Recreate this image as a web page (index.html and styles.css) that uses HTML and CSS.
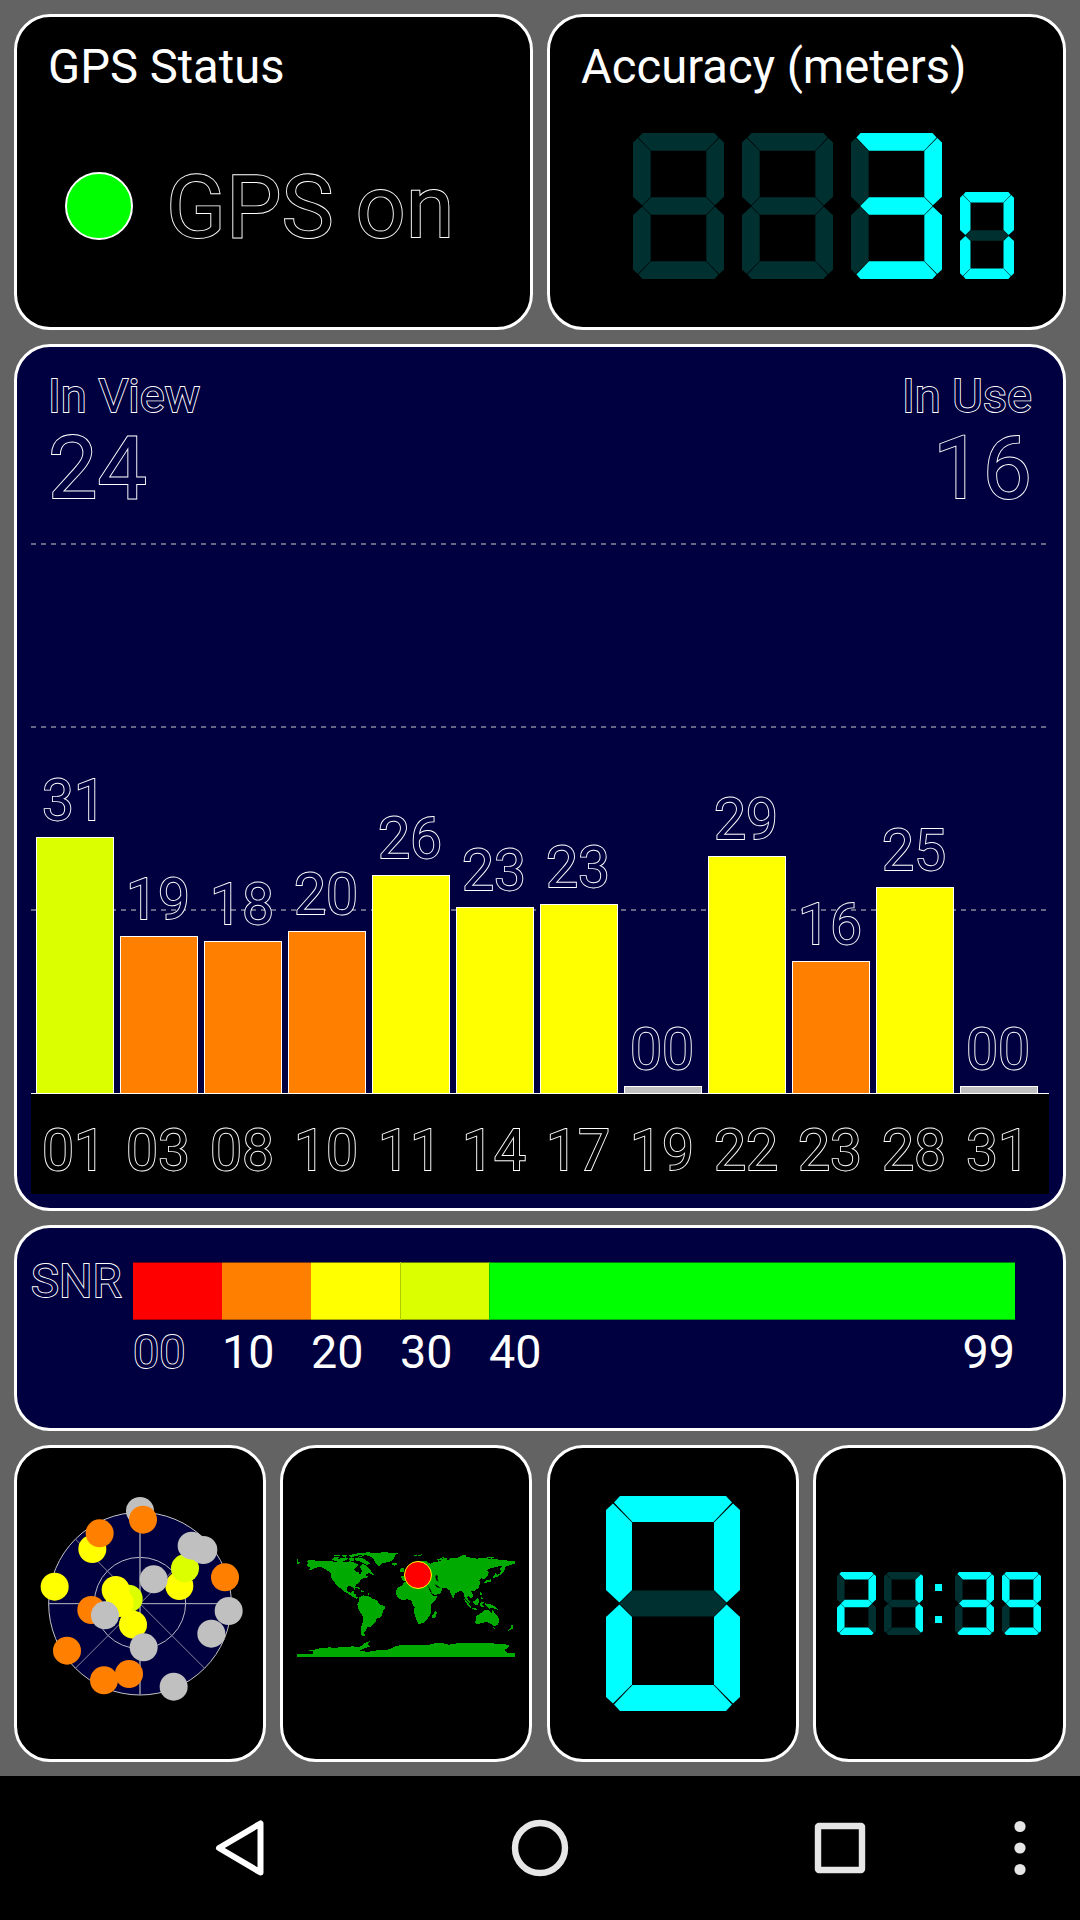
FILE: index.html
```html
<!DOCTYPE html>
<html lang="en">
<head>
<meta charset="utf-8">
<title>GPS Status</title>
<link rel="stylesheet" href="styles.css">
</head>
<body>
<svg class="defs" width="0" height="0" aria-hidden="true">
  <symbol id="digit" viewBox="0 0 134 215" preserveAspectRatio="none">
    <path class="sa" d="M8 6.5L14 0H120L126 6.5L107.5 26H26.5Z"/>
    <path class="sf" d="M0 14L7 7.5L26 26.5V94L13.4 106.5L0 94Z"/>
    <path class="sb" d="M134 14L127 7.5L108 26.5V94L120.6 106.5L134 94Z"/>
    <path class="sg" d="M13.6 107.5L26.3 94.5H107.7L120.4 107.5L107.7 120.5H26.3Z"/>
    <path class="se" d="M0 201L7 207.5L26 188.5V121L13.4 108.5L0 121Z"/>
    <path class="sc" d="M134 201L127 207.5L108 188.5V121L120.6 108.5L134 121Z"/>
    <path class="sd" d="M8 208.5L14 215H120L126 208.5L107.5 189H26.5Z"/>
  </symbol>
</svg>
<main class="dashboard">
  <section class="panel status">
    <h2 class="title">GPS Status</h2>
    <div class="status-row">
      <span class="lamp"></span>
      <span class="outline big">GPS on</span>
    </div>
  </section>
  <section class="panel accuracy">
    <h2 class="title">Accuracy (meters)</h2>
    <div class="digits">
      <svg class="digit n-off"><use href="#digit"/></svg>
      <svg class="digit n-off"><use href="#digit"/></svg>
      <svg class="digit n3"><use href="#digit"/></svg>
      <svg class="digit small n0"><use href="#digit"/></svg>
    </div>
  </section>
  <section class="panel chart">
    <div class="stats">
      <div><div class="outline label">In View</div><div class="outline big">24</div></div>
      <div class="right"><div class="outline label">In Use</div><div class="outline big">16</div></div>
    </div>
    <div class="plot">
      <div class="col"><span class="outline num">31</span><i class="bar lime" style="height:256px"></i></div>
      <div class="col"><span class="outline num">19</span><i class="bar orange" style="height:157px"></i></div>
      <div class="col"><span class="outline num">18</span><i class="bar orange" style="height:152px"></i></div>
      <div class="col"><span class="outline num">20</span><i class="bar orange" style="height:162px"></i></div>
      <div class="col"><span class="outline num">26</span><i class="bar yellow" style="height:218px"></i></div>
      <div class="col"><span class="outline num">23</span><i class="bar yellow" style="height:186px"></i></div>
      <div class="col"><span class="outline num">23</span><i class="bar yellow" style="height:189px"></i></div>
      <div class="col"><span class="outline num">00</span><i class="bar gray" style="height:7px"></i></div>
      <div class="col"><span class="outline num">29</span><i class="bar yellow" style="height:237px"></i></div>
      <div class="col"><span class="outline num">16</span><i class="bar orange" style="height:132px"></i></div>
      <div class="col"><span class="outline num">25</span><i class="bar yellow" style="height:206px"></i></div>
      <div class="col"><span class="outline num">00</span><i class="bar gray" style="height:7px"></i></div>
    </div>
    <div class="axis">
      <span class="outline num">01</span><span class="outline num">03</span><span class="outline num">08</span><span class="outline num">10</span><span class="outline num">11</span><span class="outline num">14</span><span class="outline num">17</span><span class="outline num">19</span><span class="outline num">22</span><span class="outline num">23</span><span class="outline num">28</span><span class="outline num">31</span>
    </div>
  </section>
  <section class="panel snr">
    <span class="outline label">SNR</span>
    <div class="scale">
      <div class="ramp"><i class="red"></i><i class="orange"></i><i class="yellow"></i><i class="lime edge"></i><i class="green edge"></i></div>
      <div class="ticks"><span class="outline">00</span><span>10</span><span>20</span><span>30</span><span>40</span><span>99</span></div>
    </div>
  </section>
  <section class="panel tile">
    <svg class="radar" width="220" height="240" viewBox="90 126 660 720">
      <circle class="sky" cx="420" cy="491" r="274"/>
      <circle class="ring" cx="420" cy="489" r="137"/>
      <path class="ring" d="M146 491H694"/>
      <path class="ring axisline" d="M420 217V765"/>
      <path class="ring thin" d="M226 297L614 685M614 297L226 685"/>
      <g class="dots">
        <circle class="gray" cx="420" cy="213" r="42"/><circle class="orange" cx="429" cy="239" r="42"/>
        <circle class="yellow" cx="277" cy="327" r="42"/><circle class="orange" cx="299" cy="280" r="42"/>
        <circle class="yellow" cx="164" cy="440" r="42"/>
        <circle class="yellow" cx="538" cy="438" r="42"/><circle class="lime" cx="555" cy="385" r="42"/>
        <circle class="gray" cx="575" cy="317" r="42"/><circle class="gray" cx="610" cy="330" r="42"/>
        <circle class="gray" cx="461" cy="418" r="42"/><circle class="orange" cx="675" cy="412" r="42"/>
        <circle class="gray" cx="686" cy="513" r="42"/><circle class="gray" cx="634" cy="581" r="42"/>
        <circle class="lime" cx="386" cy="476" r="42"/><circle class="yellow" cx="347" cy="450" r="42"/>
        <circle class="yellow" cx="359" cy="489" r="42"/><circle class="orange" cx="274" cy="510" r="42"/>
        <circle class="gray" cx="315" cy="526" r="42"/><circle class="yellow" cx="399" cy="554" r="42"/>
        <circle class="gray" cx="431" cy="622" r="42"/><circle class="orange" cx="201" cy="632" r="42"/>
        <circle class="orange" cx="312" cy="721" r="42"/><circle class="orange" cx="387" cy="702" r="42"/>
        <circle class="gray" cx="521" cy="740" r="42"/>
      </g>
    </svg>
  </section>
  <section class="panel tile map-tile">
    <svg class="map" width="218" height="105" viewBox="51 96 654 315">
      <g class="land">
        <path d="M51 117L56 120L54 125L63 129L57 131H51ZM78 123L92 120L120 123L150 123L165 126L180 122L196 126L210 124L222 128L236 134L228 142L222 150L226 154L236 156L240 164L246 152L240 140L246 132L258 136L264 142L272 150L274 156L280 160L282 166L274 162L266 158L256 166L268 168L258 174L248 176L240 180L238 188L230 192L224 200L226 212L220 204L210 196L202 200L200 208L204 217L214 218L218 212L224 212L220 220L228 222L228 230L236 234L230 236L218 230L206 222L196 216L186 210L180 202L174 194L170 188L178 200L182 208L174 200L166 190L158 182L154 174L154 162L150 156L140 150L130 144L118 140L106 144L94 150L82 152L92 144L86 140L80 136L86 130Z"/>
        <path d="M156 120L162 112L178 110L172 118L186 114L198 112L204 116L194 122L180 122L170 124ZM160 106L172 104L182 106L176 109ZM182 107L200 105L206 109L190 110ZM206 116L214 112L224 116L222 122L212 124ZM224 114L236 112L250 116L262 124L270 130L262 136L252 130L240 124L228 122ZM204 107L220 102L246 98L272 97L262 101L242 105L224 109L214 111ZM234 108L252 106L250 109L238 111Z"/>
        <path d="M248 104L272 99L300 98L318 96L336 100L354 100L346 106L342 116L336 123L322 126L308 130L300 138L292 136L286 128L282 118L276 111L262 107ZM334 131L342 128L352 130L352 134L342 137Z"/>
        <path d="M220 201L232 200L242 207L236 206L226 204ZM242 211L254 213L252 216L244 215ZM264 219L268 222L266 226Z"/>
        <path d="M236 234L244 228L250 226L262 229L270 230L276 237L288 239L294 246L300 254L312 257L316 263L310 272L306 285L300 293L290 296L286 306L278 315L272 320L262 322L258 332L252 338L256 348L248 350L242 342L242 328L248 308L248 288L240 276L234 264L232 252L238 244Z"/>
        <path d="M366 196L374 186L390 184L410 184L424 192L440 192L446 202L452 218L460 228L472 229L466 240L452 254L454 272L450 286L440 300L430 309L416 312L410 302L406 288L402 276L404 262L396 250L394 240L382 238L366 241L354 233L348 222L350 208L358 200Z"/>
        <path d="M466 272L471 278L466 292L458 297L456 288ZM360 150L366 143H372V156L362 157ZM362 169H380V184L368 182Z"/>
        <path d="M376 160L388 146L400 130L420 122L440 124L452 132L462 126L480 124L486 116L500 114L504 122L510 114L530 114L548 106L566 112L590 116L612 114L640 118L668 119L684 122H705V131L698 132L690 136L678 138L672 144L664 156L660 146L668 138L658 138L648 141L634 144L620 150L626 158L622 168L612 178L604 174L598 180L600 192L596 204L584 212L574 214L580 226L574 236L566 228L560 232L568 242L572 252L564 246L554 234L552 220L544 212L532 216L524 222L522 236L516 228L508 210L498 204L484 204L488 210L480 220L464 226L456 220L446 204L440 190L424 186L410 182L392 184L380 178Z"/>
        <path d="M472 118L486 113L497 108L488 115L474 123ZM400 104L414 107L426 103L420 109H404ZM544 104L560 107L554 110ZM620 112H642L634 116ZM638 171L646 164L648 150L650 166L658 162L664 154L676 142L672 154L664 162L652 170L642 174ZM610 187L620 181L634 177L632 187L624 186L616 190Z"/>
        <path d="M552 236L560 242L570 256L574 264L568 262L558 248ZM576 264L592 266L590 270L576 267ZM578 246L588 240L592 232L598 240L594 254L584 254ZM600 216L608 222L602 226ZM604 230L610 238L602 236ZM600 248L614 246L606 252L612 260L604 262L598 256ZM614 250L628 252L644 258L654 270L640 264L628 266L618 258Z"/>
        <path d="M588 290L598 282L606 278L614 271L622 270L630 273L634 282L638 268L644 279L654 290L658 302L654 314L642 320L634 312L620 306L606 309L590 314L584 306L588 300ZM640 322L648 324L644 327ZM692 313L700 318L698 326L684 333L692 324ZM249 344L258 349L250 348Z"/>
        <path d="M51 402H100L98 394L84 392L108 388L124 384L150 382L166 384L184 380L206 382L218 378L232 382L246 378L252 370L270 363L264 372L270 380L252 386L240 392L264 396L284 392L304 390L330 388L344 380L362 375L408 375L448 374L470 368L488 369L506 374L530 370L562 368L600 368L630 368L650 372L686 374L688 380L674 390L680 398L705 400V411H51Z"/>
      </g>
      <path class="water" d="M468 164L474 168L472 176L476 184L470 182L466 172ZM440 190L450 206L456 218L452 216ZM464 192L474 198L482 204L470 202Z"/>
      <circle class="pin" cx="414" cy="165" r="40.5"/>
    </svg>
  </section>
  <section class="panel tile">
    <svg class="digit huge n0"><use href="#digit"/></svg>
  </section>
  <section class="panel tile">
    <div class="clock">
      <svg class="digit tiny n2"><use href="#digit"/></svg>
      <svg class="digit tiny n1"><use href="#digit"/></svg>
      <div class="colon"><i></i><i></i></div>
      <svg class="digit tiny n3"><use href="#digit"/></svg>
      <svg class="digit tiny n9"><use href="#digit"/></svg>
    </div>
  </section>
</main>
<nav class="navbar">
  <svg width="60" height="60" viewBox="0 0 60 60"><path class="back" d="M50.5 5.5V54.5L9 30Z"/></svg>
  <svg width="60" height="60" viewBox="0 0 60 60"><circle class="line" cx="30" cy="30" r="25"/></svg>
  <svg width="60" height="60" viewBox="0 0 60 60"><rect class="line" x="8" y="8" width="44" height="44" rx="1"/></svg>
  <svg class="more" width="60" height="60" viewBox="0 0 60 60"><g class="solid"><circle cx="30" cy="8.5" r="5.6"/><circle cx="30" cy="30" r="5.6"/><circle cx="30" cy="51.5" r="5.6"/></g></svg>
</nav>
</body>
</html>
```
FILE: styles.css
```css
* { box-sizing: border-box; }
body {
  margin: 0;
  width: 1080px;
  height: 1920px;
  overflow: hidden;
  background: #000;
  color: #fff;
  font-family: Roboto, sans-serif;
}
svg { display: block; }
.defs { position: absolute; }

.dashboard {
  display: grid;
  grid-template-columns: 252px 253px 252px 253px;
  grid-template-rows: 316px 867px 206px 317px;
  gap: 14px;
  height: 1776px;
  padding: 14px;
  background: #636363;
}
.panel {
  --surface: #000;
  min-width: 0;
  border: 3px solid #fff;
  border-radius: 36px;
  background: var(--surface);
}
.status, .accuracy { grid-column: span 2; padding: 25px 31px 0; }
.chart, .snr { --surface: #000040; grid-column: span 4; }

.title, .label {
  margin: 0;
  font-size: 47px;
  font-weight: 400;
  line-height: 48px;
  white-space: nowrap;
}
.title { font-size: 47.2px; line-height: 50px; }
/* The fill is painted over the stroke so that overlapping contours stay hidden */
.outline {
  color: var(--surface);
  -webkit-text-stroke: 1.8px #fff;
  paint-order: stroke fill;
}
.big { font-size: 88px; line-height: 90px; }
.num { font-size: 57px; line-height: 60px; }

.status-row { display: flex; align-items: center; gap: 33px; margin-top: 70px; padding-left: 17px; }
.lamp {
  width: 68px;
  height: 68px;
  margin-bottom: 2px;
  border: 2px solid #fff;
  border-radius: 50%;
  background: #0f0;
}

/* Seven-segment digits: each digit class names the segments that are off */
.digit { width: 91px; height: 146px; fill: #0ff; }
.digit.small { width: 54px; height: 87px; }
.digit.huge { width: 134px; height: 215px; }
.digit.tiny { width: 39px; height: 63px; }
.sa { fill: var(--a); } .sb { fill: var(--b); } .sc { fill: var(--c); }
.sd { fill: var(--d); } .se { fill: var(--e); } .sf { fill: var(--f); } .sg { fill: var(--g); }
.digit { --off: #003030; --a: #0ff; --b: #0ff; --c: #0ff; --d: #0ff; --e: #0ff; --f: #0ff; --g: #0ff; }
.n-off { --a: var(--off); --b: var(--off); --c: var(--off); --d: var(--off); --e: var(--off); --f: var(--off); --g: var(--off); }
.n0 { --g: var(--off); }
.n1 { --a: var(--off); --d: var(--off); --e: var(--off); --f: var(--off); --g: var(--off); }
.n2 { --c: var(--off); --f: var(--off); }
.n3 { --e: var(--off); --f: var(--off); }
.n9 { --e: var(--off); }
.digits { display: flex; justify-content: flex-end; align-items: flex-end; gap: 18px; margin-top: 41px; padding-right: 18px; }

.stats { display: flex; justify-content: space-between; height: 167px; padding: 25px 31px 0; }
.stats .big { margin-top: 3px; }
.right { text-align: right; }
.plot {
  display: flex;
  align-items: flex-end;
  gap: 6px;
  height: 579px;
  margin: 0 14px;
  padding-left: 5px;
  background:
    linear-gradient(90deg, #666685 50%, transparent 50%) 0 29px / 10px 2px repeat-x,
    linear-gradient(90deg, #666685 50%, transparent 50%) 0 212px / 10px 2px repeat-x,
    linear-gradient(90deg, #666685 50%, transparent 50%) 0 395px / 10px 2px repeat-x;
}
.col { display: flex; flex-direction: column; align-items: center; gap: 6px; width: 78px; }
.col .num { margin-right: 2px; }
.bar { width: 100%; border: 1px solid #fff; border-bottom: 0; }
.axis {
  --surface: #000;
  display: flex;
  gap: 6px;
  height: 101px;
  margin: 0 14px;
  padding: 27px 0 0 4px;
  border-top: 1px solid #fff;
  background: var(--surface);
}
.axis .num { width: 78px; text-align: center; }

.red { background: #f00; }
.orange { background: #ff8000; fill: #ff8000; }
.yellow { background: #ff0; fill: #ff0; }
.lime { background: #dcff00; fill: #dcff00; }
.green { background: #0f0; }
.gray { background: #c0c0c0; fill: #c0c0c0; }

.snr { display: grid; grid-template-columns: 102px 882px; align-items: start; padding: 28px 0 0 14px; }
.snr .label { padding-top: 1px; }
.ramp, .ticks { display: grid; grid-template-columns: 89px 89px 89px 89px 1fr; }
.ramp { height: 58px; margin-top: 6px; }
.ramp i { box-shadow: inset 0 1px rgba(0, 0, 32, .55), inset 0 -1px rgba(0, 0, 32, .35); }
.ramp .edge { border-left: 1px solid rgba(0, 0, 0, .2); }
.ticks { grid-template-columns: 89px 89px 89px 89px 1fr auto; margin-top: 8px; font-size: 46.7px; line-height: 48px; }

.tile { display: flex; align-items: center; justify-content: center; }
.map-tile { justify-self: start; width: 252px; }
.radar { margin-bottom: 3px; }
.sky { fill: #000040; stroke: #c4c4c4; stroke-width: 3; }
.ring { fill: none; stroke: #b9b9c8; stroke-width: 3; }
.axisline { stroke: #85859c; stroke-width: 5; }
.thin { stroke: #85859c; }
.map { margin-top: 2px; overflow: visible; }
.land { fill: #0a0; shape-rendering: crispEdges; }
.water { fill: #000; }
.pin { fill: #f00; stroke: #ff0; stroke-width: 3; }
.clock { display: flex; align-items: center; gap: 8.3px; margin-right: 1px; }
.colon { display: flex; flex-direction: column; justify-content: space-between; width: 7px; height: 39px; margin: 0 5px 0 3px; }
.colon i { height: 7px; background: #0ff; }

.navbar { display: flex; align-items: center; gap: 240px; height: 144px; padding-left: 210px; }
.back { fill: none; stroke: #fff; stroke-width: 6; stroke-linejoin: round; }
.line { fill: none; stroke: #e6e6e6; stroke-width: 6.4; }
.solid { fill: #e6e6e6; }
.more { margin-left: -120.5px; }
```
